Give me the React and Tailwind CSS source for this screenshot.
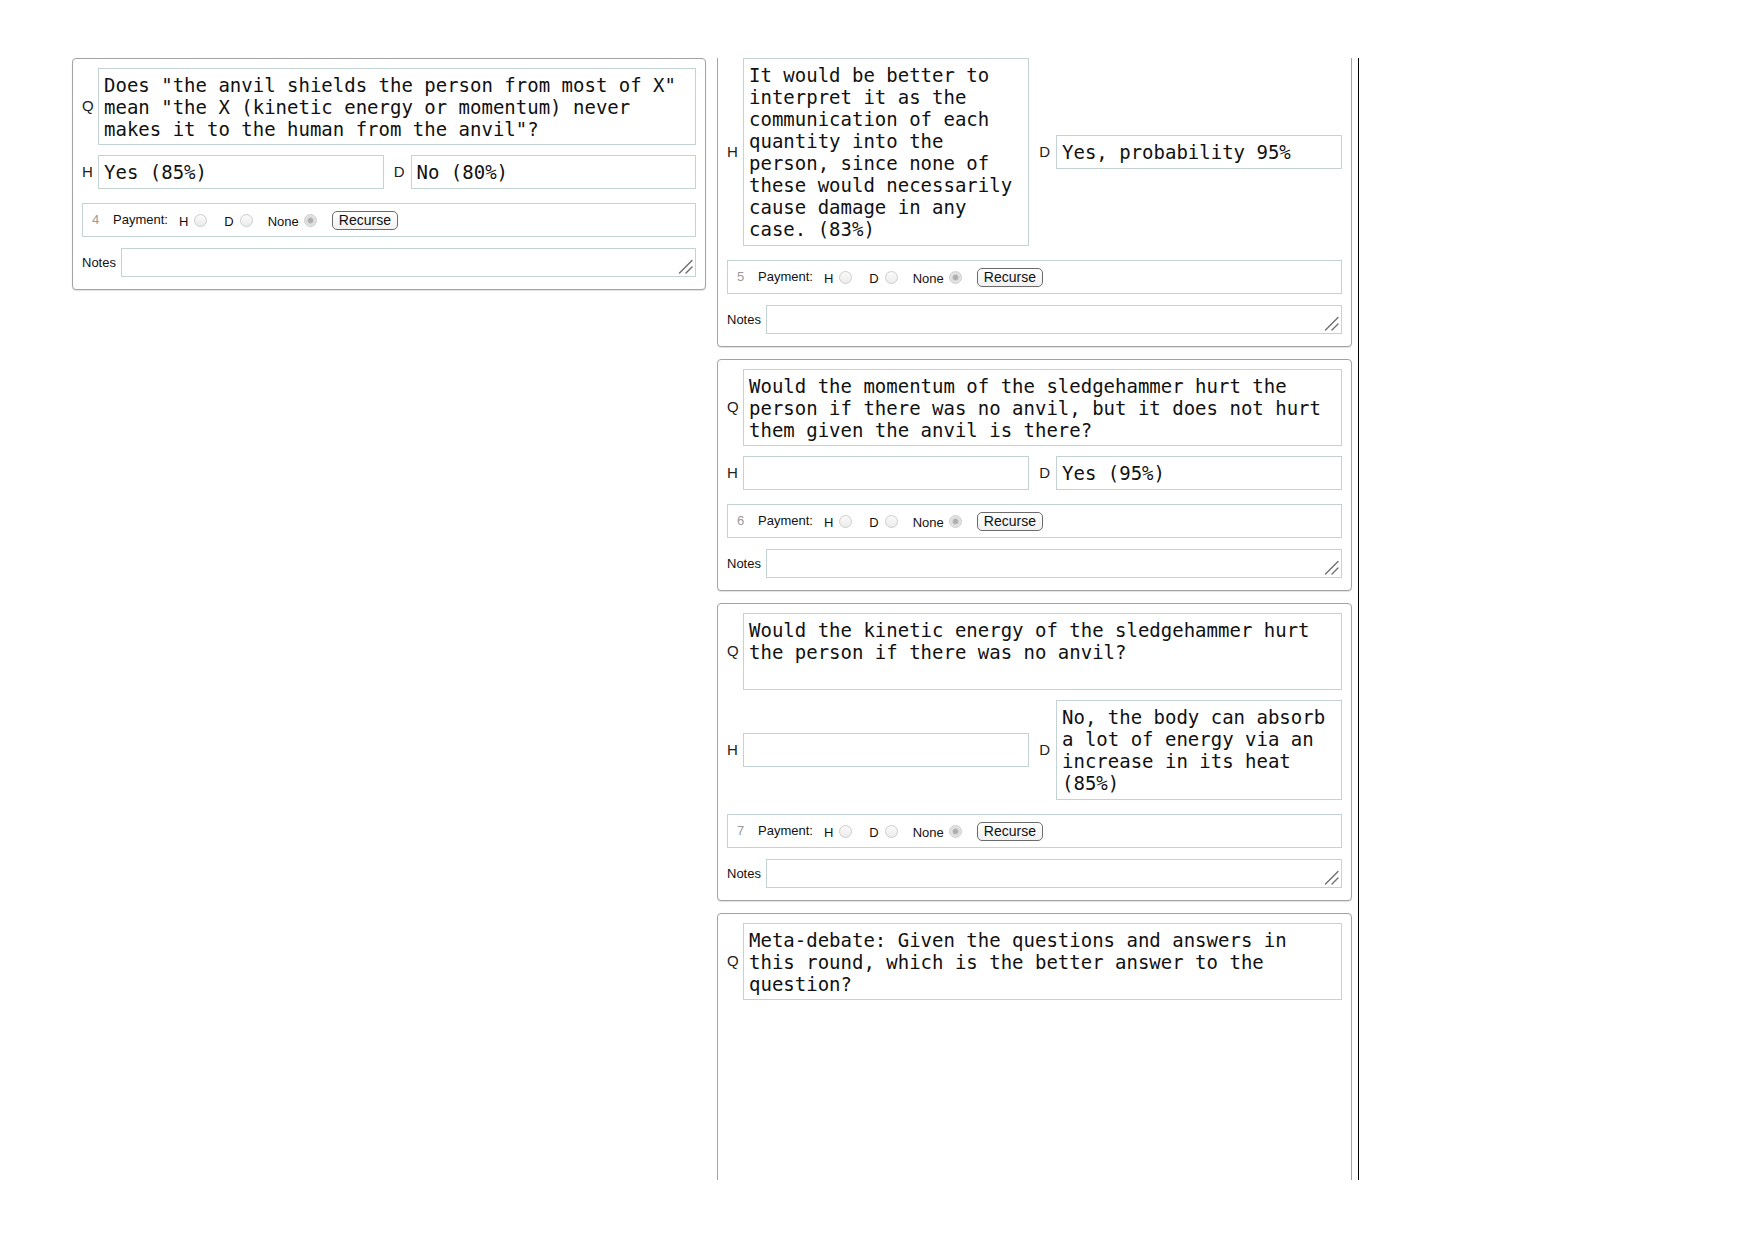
import React, { useLayoutEffect, useRef } from 'react'

const sans = "font-['Liberation_Sans',Arial,sans-serif]"

function TextBox({ children, className = '' }) {
  return (
    <div className={`border border-[#c3d3d3] bg-white px-[5px] py-[5px] font-['DejaVu_Sans_Mono',monospace] text-[19px] leading-[22px] text-[#111] whitespace-pre-wrap break-words ${className}`}>
      {children}
    </div>
  )
}

function Radio({ checked }) {
  return (
    <input
      type="radio"
      disabled
      readOnly
      checked={checked}
      className="appearance-none w-[13px] h-[13px] rounded-full border border-[#cdcdcd] bg-[linear-gradient(#fafafa,#ececec)] checked:bg-[radial-gradient(circle,#a9a9a9_0,#b4b4b4_32%,#dcdcdc_42%,#eeeeee_100%)]"
    />
  )
}

function PaymentRow({ n }) {
  return (
    <div className={`mt-[14px] h-[34px] border border-[#c3d3d3] flex items-center pl-[9px] text-[13px] text-[#111] ${sans}`}>
      <span className="text-[#999] w-[6px]">{n}</span>
      <span className="ml-[15px]">Payment:</span>
      <span className="ml-[11px] pt-[4px]">H</span>
      <span className="ml-[6px] flex"><Radio /></span>
      <span className="ml-[17px] pt-[4px]">D</span>
      <span className="ml-[6px] flex"><Radio /></span>
      <span className="ml-[15px] pt-[4px]">None</span>
      <span className="ml-[5px] flex"><Radio checked /></span>
      <button className="ml-[15px] h-[19px] px-[6px] border border-[#6b6b6b] rounded-[5px] bg-[linear-gradient(#ffffff,#f1f1f1)] text-[14px] leading-[17px] text-[#111]">
        Recurse
      </button>
    </div>
  )
}

function NotesRow() {
  return (
    <div className={`mt-[11px] flex items-center text-[13px] text-[#111] ${sans}`}>
      <span className="w-[39px] shrink-0">Notes</span>
      <div className="relative flex-1 flex">
        <textarea className="w-full h-[29px] border border-[#c3d3d3] bg-white px-[4px] outline-none resize-none" />
        <svg className="absolute right-[3px] bottom-[3px] w-[15px] h-[15px] pointer-events-none" viewBox="0 0 15 15">
          <path d="M1.5 14 L14 1.5" stroke="#6f6f6f" strokeWidth="1.4" strokeLinecap="round" />
          <path d="M8 14 L14 8" stroke="#6f6f6f" strokeWidth="1.4" strokeLinecap="round" />
        </svg>
      </div>
    </div>
  )
}

function Panel({ n, q, h, d, meta, hideQ, className = '' }) {
  return (
    <div className={`border border-[#a3a3a3] rounded-[4px] bg-white px-[9px] pt-[9px] pb-[12px] shadow-[0_1px_1px_rgba(0,0,0,0.12)] ${className}`}>
      <div className={`grid grid-cols-[16px_1fr_27px_1fr] items-center gap-y-[10px] text-[15px] text-[#222] ${sans}`}>
        <span>{hideQ ? '' : 'Q'}</span>
        <TextBox className="col-span-3 h-[77px]">{q}</TextBox>
        {!meta && (
          <>
            <span>H</span>
            <TextBox className="min-h-[34px]">{h}</TextBox>
            <span className="text-right pr-[6px]">D</span>
            <TextBox className="min-h-[34px]">{d}</TextBox>
          </>
        )}
      </div>
      {meta ? (
        <div className="h-[320px]" />
      ) : (
        <>
          <PaymentRow n={n} />
          <NotesRow />
        </>
      )}
    </div>
  )
}

export default function App() {
  const colRef = useRef(null)

  useLayoutEffect(() => {
    if (colRef.current) colRef.current.scrollTop = 97
  }, [])

  return (
    <div className="min-h-[1240px] bg-white flex items-start gap-[11px] pt-[58px] pl-[72px]">
      <div className="w-[634px] shrink-0">
        <Panel
          n={4}
          q={'Does "the anvil shields the person from most of X" mean "the X (kinetic energy or momentum) never makes it to the human from the anvil"?'}
          h="Yes (85%)"
          d="No (80%)"
        />
      </div>

      <div
        ref={colRef}
        className="w-[642px] h-[1122px] shrink-0 overflow-hidden pr-[6px] border-r border-black"
      >
        <div className="flex flex-col gap-[12px]">
          <Panel
            n={5}
            hideQ
            q=""
            h="It would be better to interpret it as the communication of each quantity into the person, since none of these would necessarily cause damage in any case. (83%)"
            d="Yes, probability 95%"
          />
          <Panel
            n={6}
            q="Would the momentum of the sledgehammer hurt the person if there was no anvil, but it does not hurt them given the anvil is there?"
            h=""
            d="Yes (95%)"
          />
          <Panel
            n={7}
            q="Would the kinetic energy of the sledgehammer hurt the person if there was no anvil?"
            h=""
            d="No, the body can absorb a lot of energy via an increase in its heat (85%)"
          />
          <Panel
            meta
            q="Meta-debate: Given the questions and answers in this round, which is the better answer to the question?"
          />
        </div>
      </div>
    </div>
  )
}
